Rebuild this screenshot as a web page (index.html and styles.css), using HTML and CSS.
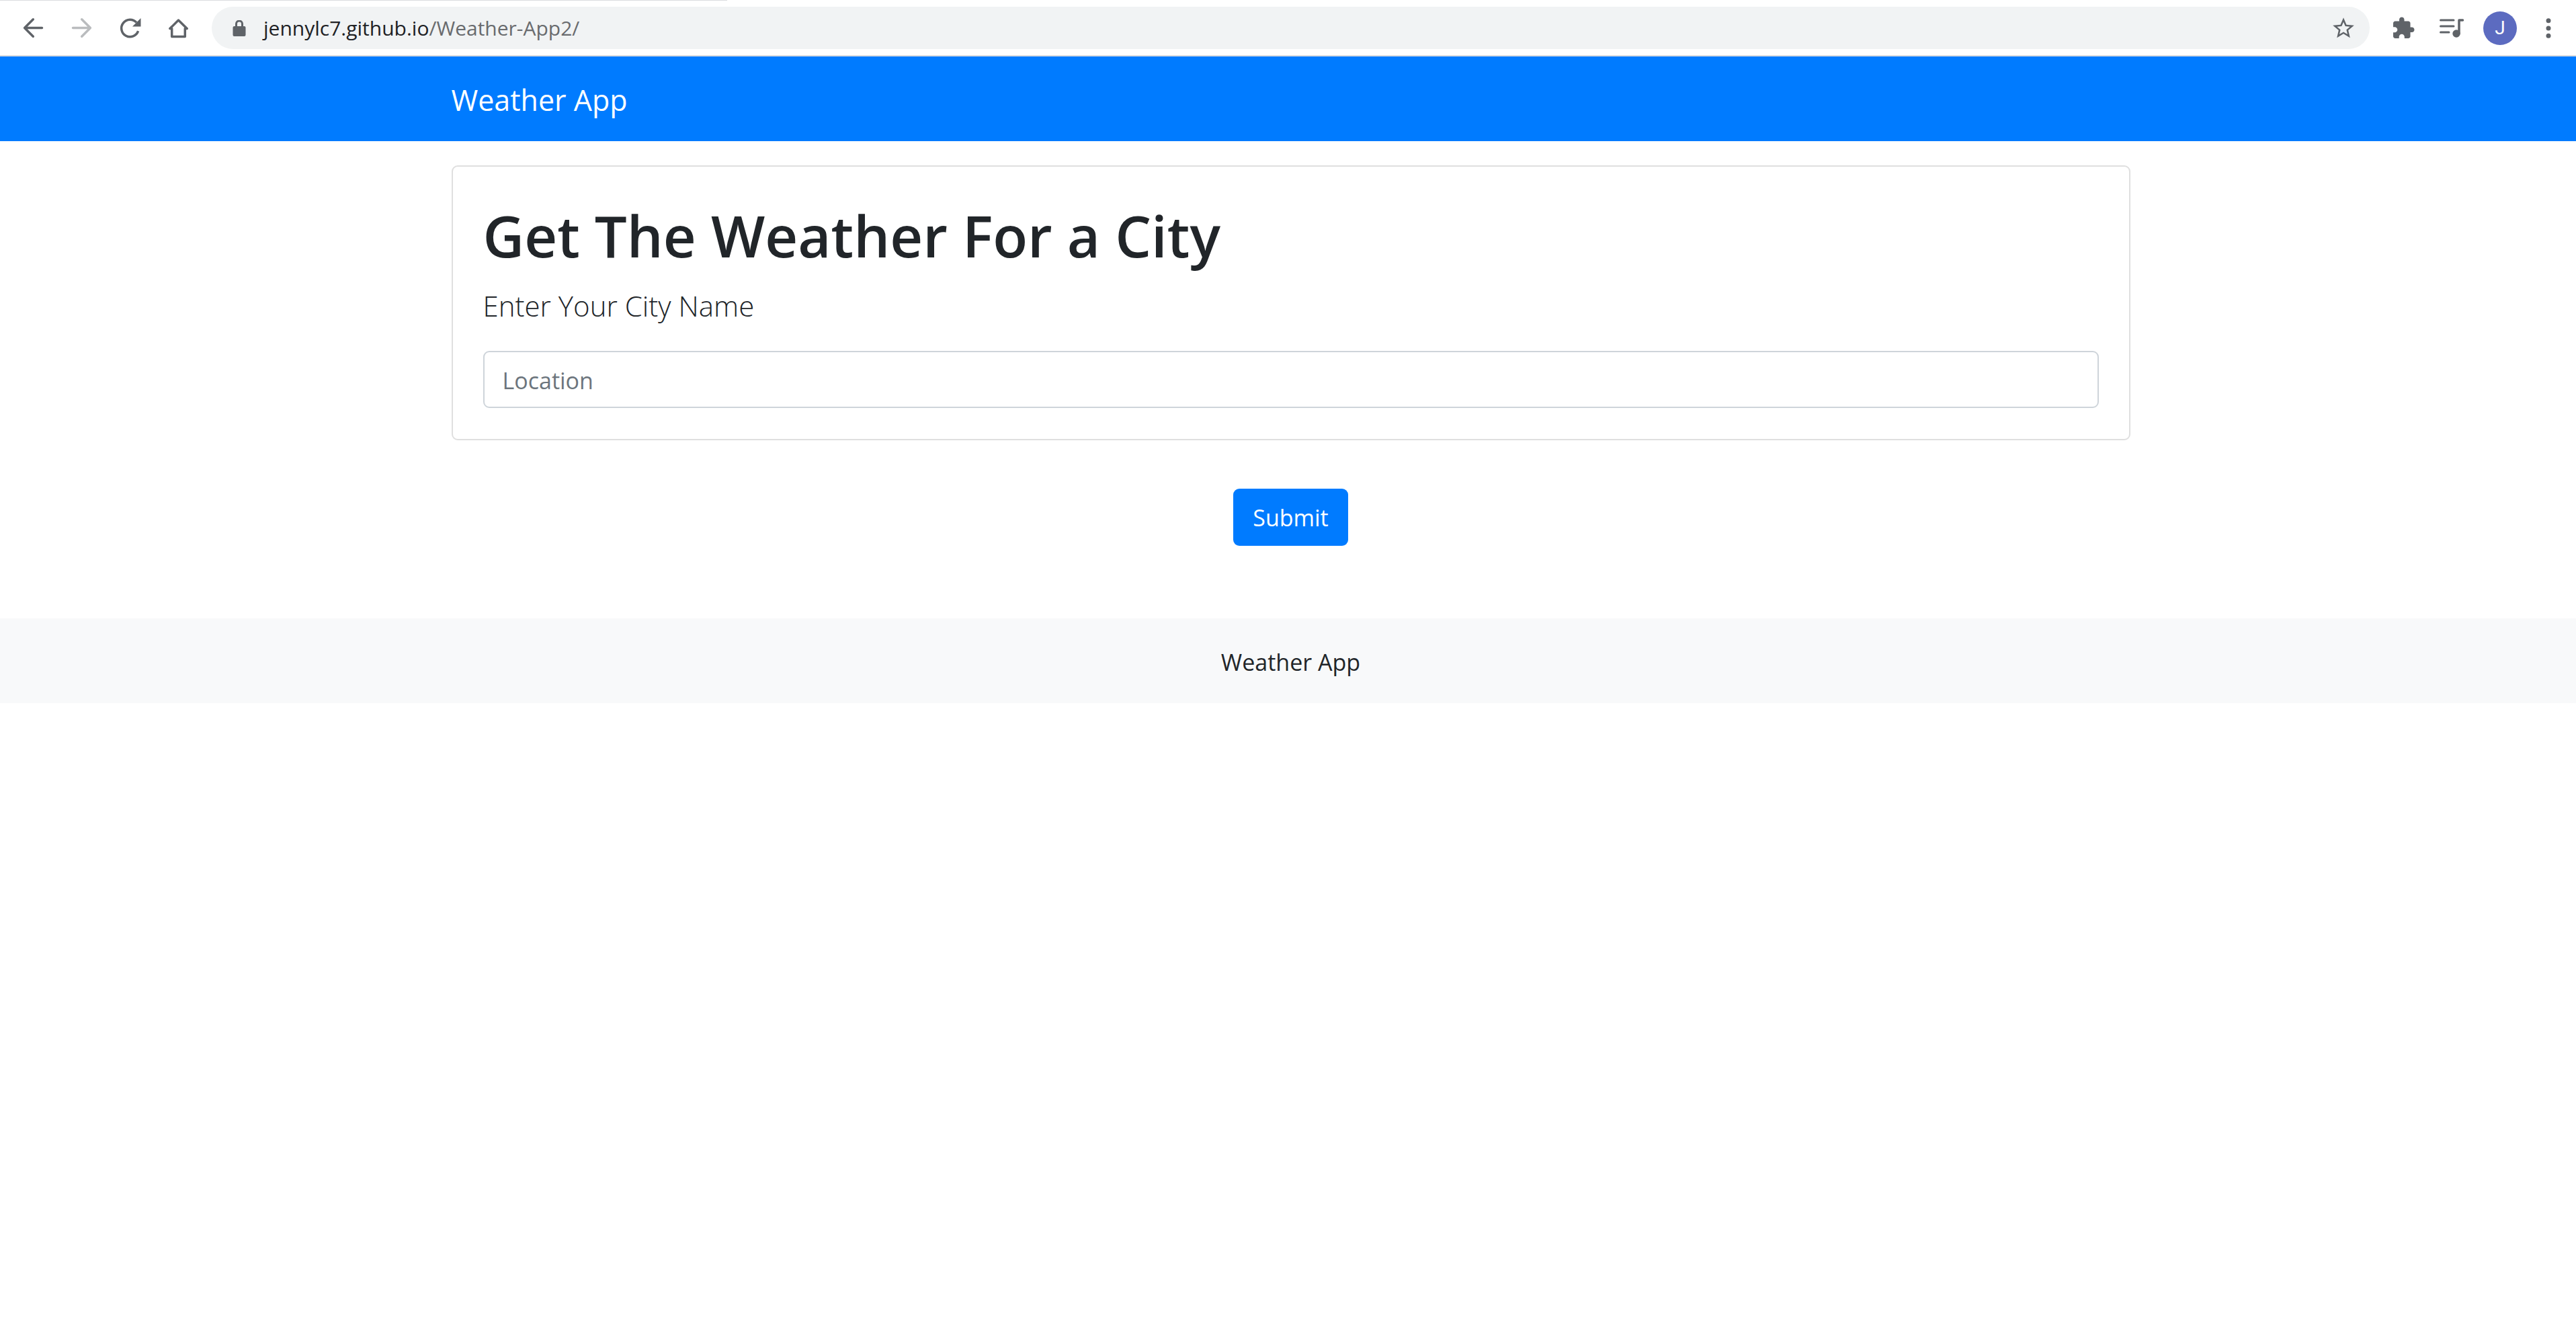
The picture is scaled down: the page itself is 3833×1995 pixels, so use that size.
FILE: index.html
```html
<!DOCTYPE html>
<html lang="en">
<head>
<meta charset="utf-8">
<title>Weather App</title>
<meta name="viewport" content="width=device-width, initial-scale=1">
<link rel="stylesheet" href="styles.css">
</head>
<body>
<div class="toolbar">
  <div class="tab-edge"></div>
  <button class="tool" type="button" aria-label="Back">
    <svg class="icon" viewBox="0 0 48 48"><path class="line round" d="M37.5 23.5H12M24.3 10.8L11.6 23.5L24.3 36.2"/></svg>
  </button>
  <button class="tool tool-off" type="button" aria-label="Forward">
    <svg class="icon" viewBox="0 0 48 48"><path class="line round" d="M11.5 23.5H37M24.7 10.8L37.4 23.5L24.7 36.2"/></svg>
  </button>
  <button class="tool" type="button" aria-label="Reload">
    <svg class="icon" viewBox="0 0 48 48"><path class="line" d="M34 15.4A12.8 12.8 0 1 0 36.6 28.2"/><path d="M40.5 9v12.6H28z"/></svg>
  </button>
  <button class="tool" type="button" aria-label="Home">
    <svg class="icon" viewBox="0 0 48 48"><path class="line" stroke-linejoin="round" d="M14.7 36.6V24.6H11.8L24.5 12L37.2 24.6H34.3V36.6Z"/></svg>
  </button>
  <div class="omnibox">
    <svg class="lock" viewBox="0 0 20 24" aria-hidden="true"><path d="M2.5 9H17.5A2 2 0 0 1 19.5 11V22A2 2 0 0 1 17.5 24H2.5A2 2 0 0 1 .5 22V11A2 2 0 0 1 2.5 9z"/><path class="line thin" d="M5.5 10V5.6a4.5 4.5 0 0 1 9 0V10"/></svg>
    <span class="url">jennylc7.github.io<span class="path">/Weather-App2/</span></span>
    <button class="bookmark" type="button" aria-label="Bookmark this page">
      <svg class="star" viewBox="0 0 24 24"><path d="M22 9.24l-7.19-.62L12 2 9.19 8.63 2 9.24l5.46 4.73L5.82 21 12 17.27 18.18 21l-1.63-7.03L22 9.24zM12 15.4l-3.76 2.27 1-4.28-3.32-2.88 4.38-.38L12 6.1l1.71 4.04 4.38.38-3.32 2.88 1 4.28L12 15.4z"/></svg>
    </button>
  </div>
  <button class="tool" type="button" aria-label="Extensions">
    <svg class="puzzle" viewBox="0 0 24 24"><path d="M20.5 11H19V7c0-1.1-.9-2-2-2h-4V3.5C13 2.12 11.88 1 10.5 1S8 2.12 8 3.5V5H4c-1.1 0-1.99.9-1.99 2v3.8H3.5c1.49 0 2.7 1.21 2.7 2.7s-1.21 2.7-2.7 2.7H2V20c0 1.1.9 2 2 2h3.8v-1.5c0-1.49 1.21-2.7 2.7-2.7s2.7 1.21 2.7 2.7V22H17c1.1 0 2-.9 2-2v-4h1.5c1.38 0 2.5-1.12 2.5-2.5S21.88 11 20.5 11z"/></svg>
  </button>
  <button class="tool" type="button" aria-label="Media controls">
    <svg class="icon" viewBox="0 0 48 48"><path class="line round thin" d="M7.5 12H27M7.5 21H27M7.5 30H20"/><path class="line round" d="M35 32V12H40.5"/><circle cx="31" cy="32" r="5.7"/></svg>
  </button>
  <button class="tool" type="button" aria-label="Profile"><span class="avatar">J</span></button>
  <button class="tool" type="button" aria-label="Menu">
    <svg class="icon" viewBox="0 0 48 48"><circle cx="24" cy="12.7" r="3.5"/><circle cx="24" cy="24" r="3.5"/><circle cx="24" cy="35.2" r="3.5"/></svg>
  </button>
</div>

<nav class="navbar">
  <div class="container"><a class="brand" href="#">Weather App</a></div>
</nav>

<form class="weather" onsubmit="return false">
  <div class="container">
    <div class="card">
      <h1 class="title">Get The Weather For a City</h1>
      <label class="lead" for="location">Enter Your City Name</label>
      <input class="field" id="location" type="text" placeholder="Location">
    </div>
    <button class="submit" type="submit">Submit</button>
  </div>
</form>

<footer class="footer">Weather App</footer>
</body>
</html>
```
FILE: styles.css
```css
* { box-sizing: border-box; }

body {
  margin: 0;
  background: #fff;
  color: #212529;
  font-family: "Open Sans", "Noto Sans", sans-serif;
  font-size: 34px;
  line-height: 54px;
}

button {
  border: 0;
  background: none;
  padding: 0;
  font: inherit;
  cursor: pointer;
}

svg { display: block; fill: currentColor; }

.line { fill: none; stroke: currentColor; stroke-width: 3.5; }
.round { stroke-linecap: round; stroke-linejoin: round; }
.thin { stroke-width: 3; }

/* Browser toolbar */
.toolbar {
  position: relative;
  display: flex;
  align-items: center;
  height: 84px;
  padding: 1px 5px 0 13px;
  border-bottom: 2px solid #dadce0;
  color: #5f6368;
}

.tab-edge {
  position: absolute;
  top: 0;
  left: 0;
  width: 1082px;
  height: 1px;
  background: #dadce0;
}

.tool {
  display: flex;
  flex: none;
  align-items: center;
  justify-content: center;
  width: 72px;
  height: 72px;
  color: inherit;
}

.tool-off { color: #babcbe; }
.icon { width: 48px; height: 48px; }
.puzzle { width: 36px; height: 36px; }

.omnibox {
  display: flex;
  flex: 1;
  align-items: center;
  height: 63px;
  margin: 0 14px;
  padding: 0 20px 0 31px;
  border-radius: 32px;
  background: #f1f3f4;
}

.lock { width: 20px; height: 24px; }

.url {
  flex: 1;
  margin-left: 26px;
  color: #202124;
  font-size: 30px;
}

.path { color: #696b6e; }
.bookmark { color: #5f6368; }
.star { width: 38px; height: 38px; }

.avatar {
  width: 50px;
  height: 50px;
  border-radius: 50%;
  background: #5c6bc0;
  color: #fff;
  font-family: Roboto, sans-serif;
  font-size: 28px;
  line-height: 50px;
}

/* Page */
.container {
  width: 100%;
  max-width: 2498px;
  margin: 0 auto;
}

.navbar, .weather, .footer { padding-left: 8px; }

.navbar {
  padding-top: 31px;
  padding-bottom: 27px;
  background: #007bff;
}

.brand {
  display: block;
  color: #fff;
  font-size: 43px;
  line-height: 68px;
  text-decoration: none;
}

.weather {
  padding-top: 36px;
  padding-bottom: 108px;
}

.card {
  padding: 48px 45px 46px;
  border: 2px solid #dfdfdf;
  border-radius: 9px;
}

.title {
  margin: 0 0 17px;
  font-size: 85px;
  font-weight: 600;
  line-height: 108px;
}

.lead {
  display: block;
  margin-bottom: 33px;
  font-size: 42px;
  font-weight: 300;
  line-height: 68px;
}

.field {
  display: block;
  width: 100%;
  height: 85px;
  padding: 2px 27px 0;
  border: 2px solid #ced4da;
  border-radius: 9px;
  color: #495057;
  font: inherit;
}

.field::placeholder { color: #6c757d; opacity: 1; }

.submit {
  display: block;
  height: 85px;
  margin: 72px auto 0;
  padding: 0 29px;
  border-radius: 9px;
  background: #007bff;
  color: #fff;
}

.footer {
  padding-top: 38px;
  padding-bottom: 34px;
  background: #f8f9fa;
  text-align: center;
}
```
